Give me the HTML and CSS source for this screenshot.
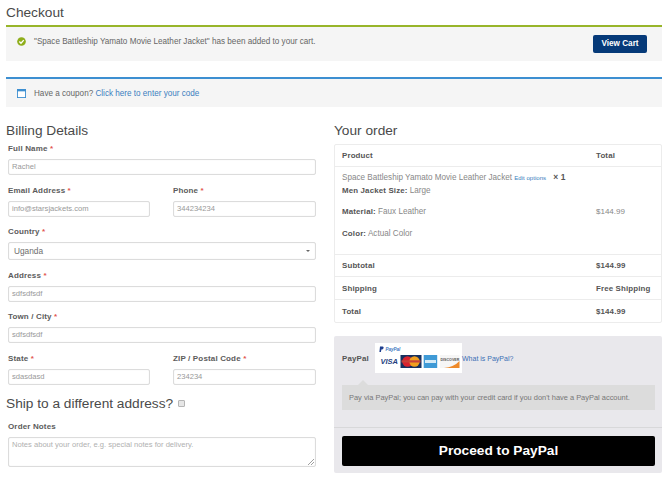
FILE: index.html
```html
<!DOCTYPE html>
<html lang="en">
<head>
<meta charset="utf-8">
<title>Checkout</title>
<link rel="stylesheet" href="styles.css">
</head>
<body>
<h1 class="page-title">Checkout</h1>
<div class="notice notice-green">
  <svg class="notice-icon" viewBox="0 0 10 10" width="9" height="9"><circle cx="5" cy="5" r="4.8" fill="#8fae1b"/><path d="M2.6 5.1 4.4 6.9 7.5 3.5" fill="none" stroke="#fff" stroke-width="1.5"/></svg>
  <span class="notice-text">"Space Battleship Yamato Movie Leather Jacket" has been added to your cart.</span>
  <a class="btn-cart">View Cart</a>
</div>
<div class="notice notice-blue">
  <svg class="notice-icon-cal" viewBox="0 0 10 10" width="9" height="9"><rect x=".5" y=".5" width="9" height="9" fill="#fff" stroke="#3d8fd1"/><rect x="0" y="0" width="10" height="2.6" fill="#3d8fd1"/></svg>
  <span class="notice-text">Have a coupon? <a class="link">Click here to enter your code</a></span>
</div>
<div class="columns">
  <form class="billing">
    <h2 class="section-title">Billing Details</h2>
    <div class="field first"><label>Full Name <i>*</i></label><div class="input">Rachel</div></div>
    <div class="field-row">
      <div class="field"><label>Email Address <i>*</i></label><div class="input">info@starsjackets.com</div></div>
      <div class="field"><label>Phone <i>*</i></label><div class="input">344234234</div></div>
    </div>
    <div class="field"><label>Country <i>*</i></label><div class="input select"><span>Uganda</span><b class="caret"></b></div></div>
    <div class="field"><label>Address <i>*</i></label><div class="input">sdfsdfsdf</div></div>
    <div class="field"><label>Town / City <i>*</i></label><div class="input">sdfsdfsdf</div></div>
    <div class="field-row">
      <div class="field"><label>State <i>*</i></label><div class="input">sdasdasd</div></div>
      <div class="field"><label>ZIP / Postal Code <i>*</i></label><div class="input">234234</div></div>
    </div>
    <h2 class="ship-title">Ship to a different address? <span class="checkbox"></span></h2>
    <div class="field notes"><label>Order Notes</label><div class="input textarea">Notes about your order, e.g. special notes for delivery.<svg class="grip" viewBox="0 0 6 6" width="6" height="6"><path d="M0 6 6 0M3 6 6 3" stroke="#888" stroke-width=".8"/></svg></div></div>
  </form>
  <div class="order">
    <h2 class="section-title">Your order</h2>
    <div class="order-table">
      <div class="row head"><span class="c1">Product</span><span class="c2">Total</span></div>
      <div class="row product">
        <div class="c1 details">
          <div class="line-name">Space Battleship Yamato Movie Leather Jacket <a class="edit">Edit options</a> <b class="qty">× 1</b></div>
          <div class="line-size"><b>Men Jacket Size:</b> Large</div>
          <div class="line-mat"><b>Material:</b> Faux Leather</div>
          <div class="line-col"><b>Color:</b> Actual Color</div>
        </div>
        <span class="c2 price">$144.99</span>
      </div>
      <div class="row sum"><span class="c1">Subtotal</span><span class="c2">$144.99</span></div>
      <div class="row sum"><span class="c1">Shipping</span><span class="c2">Free Shipping</span></div>
      <div class="row sum last"><span class="c1">Total</span><span class="c2">$144.99</span></div>
    </div>
    <div class="payment">
      <div class="pay-head">
        <span class="pay-label">PayPal</span>
        <svg class="pay-logo" viewBox="0 0 87 30" width="87" height="30">
          <rect width="87" height="30" fill="#fff"/>
          <path d="M5 3.5h2.6q1.4.2 1 1.600-.4 1.500-2.200 1.500l-.5 2.400H4.400z" fill="#1f3f8f"/>
          <text x="10.500" y="8" class="svg-pp">PayPal</text>
          <text x="5.500" y="21" class="svg-visa">VISA</text>
          <rect x="25.500" y="12" width="21" height="13" fill="#16305f"/>
          <circle cx="32.500" cy="18.500" r="5.200" fill="#d9232e"/>
          <circle cx="39.500" cy="18.500" r="5.200" fill="#f0a020"/>
          <rect x="26.500" y="17.300" width="19" height="2.200" fill="#c8423a"/>
          <rect x="48.700" y="12" width="13.500" height="13" fill="#3f9ad6"/>
          <rect x="50" y="17" width="11" height="3" fill="#d6ebf7"/>
          <rect x="65" y="12" width="19.500" height="13" fill="#f6f6f6"/>
          <text x="65.500" y="17.500" class="svg-disc">DISCOVER</text>
          <path d="M84.500 18V25H69Q79 24 84.500 18Z" fill="#ee8a2a"/>
        </svg>
        <a class="what">What is PayPal?</a>
      </div>
      <div class="pay-desc">Pay via PayPal; you can pay with your credit card if you don't have a PayPal account.</div>
      <div class="pay-foot"><a class="btn-proceed">Proceed to PayPal</a></div>
    </div>
  </div>
</div>
</body>
</html>
```
FILE: styles.css
```css
* { box-sizing: border-box; }
html, body { margin: 0; padding: 0; }
body {
  width: 668px;
  height: 480px;
  overflow: hidden;
  padding: 0 6px;
  background: #fff;
  font-family: "Liberation Sans", Arial, sans-serif;
  color: #6d6d6d;
  font-size: 8.150px;
}
.page-title {
  margin: 0;
  height: 25px;
  font-weight: 400;
  font-size: 13.700px;
  line-height: 25px;
  color: #4a4a4a;
}
.notice {
  display: flex;
  align-items: center;
  width: 656px;
  background: #f5f5f5;
}
.notice-green {
  height: 36px;
  border-top: 2px solid #98b52a;
  padding: 0 15px 0 12px;
}
.notice-green .notice-icon { margin-top: -6px; }
.notice-green .notice-text { margin-top: -6px; }
.notice-blue {
  height: 30px;
  margin-top: 16px;
  border-top: 2px solid #3d8fd1;
  padding: 0 12px;
}
.notice-icon, .notice-icon-cal { flex: none; margin-right: 8px; margin-left: -1px; }
.notice-text { color: #666; flex: 1; }
.link { color: #3c7fc0; }
.btn-cart {
  flex: none;
  width: 54px;
  height: 18px;
  margin-top: -1px;
  border-radius: 2px;
  background: #063a79;
  color: #fff;
  font-weight: 700;
  font-size: 8.200px;
  line-height: 18px;
  text-align: center;
}
.columns {
  display: flex;
  margin-top: 14px;
  gap: 18px;
}
.billing { width: 310px; flex: none; }
.order { width: 328px; flex: none; }
.section-title {
  margin: 0;
  height: 19px;
  font-weight: 400;
  font-size: 13.700px;
  line-height: 19px;
  color: #4a4a4a;
}
.field { margin-top: 9.500px; padding-left: 2px; }
.field.first { margin-top: 3px; }
.field label {
  display: block;
  height: 11px;
  margin-bottom: 5px;
  font-weight: 700;
  font-size: 8px;
  line-height: 11px;
  letter-spacing: .15px;
  color: #5c5c5c;
}
.field label i { font-style: normal; color: #e2564f; }
.field-row { display: grid; grid-template-columns: 144px 145px; column-gap: 21px; }
.input {
  height: 16px;
  width: 100%;
  padding-left: 3px;
  border: 1px solid #dcdcdc;
  border-radius: 2px;
  box-shadow: inset 0 0 1px #ddd;
  background: #fff;
  color: #999;
  font-size: 7.600px;
  line-height: 14px;
}
.select {
  display: flex;
  justify-content: space-between;
  align-items: center;
  height: 18px;
  padding: 0 5px;
  color: #6d6d6d;
  font-size: 8.300px;
}
.caret {
  width: 0;
  height: 0;
  border: 2.500px solid transparent;
  border-top-color: #666;
  border-bottom: 0;
}
.ship-title {
  display: flex;
  align-items: center;
  margin: 9px 0 0;
  height: 19px;
  font-weight: 400;
  font-size: 13.700px;
  line-height: 19px;
  color: #4a4a4a;
  white-space: pre;
}
.checkbox {
  width: 7px;
  height: 7px;
  margin-left: 1px;
  border: 1px solid #b5b5b5;
  border-radius: 1px;
  background: #e6e6e6;
}
.field.notes { margin-top: 8px; }
.textarea {
  position: relative;
  height: 30px;
  color: #b0b0b0;
  line-height: 14px;
}
.grip { position: absolute; right: 1px; bottom: 1px; }
.order-table {
  width: 328px;
  margin-top: 3.500px;
  border: 1px solid #ececec;
  border-radius: 2px;
}
.row { display: flex; align-items: center; padding-left: 7px; }
.c1 { width: 254px; flex: none; }
.c2 { flex: 1; white-space: nowrap; }
.head, .sum {
  height: 22.500px;
  border-bottom: 1px solid #ececec;
  font-weight: 700;
  font-size: 7.900px;
  letter-spacing: .15px;
  color: #555;
}
.sum { padding-top: 1px; }
.head { height: 22px; }
.sum.last { border-bottom: 0; }
.product {
  height: 88px;
  border-bottom: 1px solid #ececec;
  align-items: flex-start;
}
.details { color: #888; padding-top: 4px; }
.details b { color: #555; font-size: 7.900px; letter-spacing: .15px; }
.line-name { height: 12px; line-height: 12px; white-space: nowrap; }
.line-size { height: 12px; line-height: 12px; margin-top: 2px; }
.line-mat { height: 12px; line-height: 12px; margin-top: 9px; }
.line-col { height: 12px; line-height: 12px; margin-top: 10px; }
.edit { color: #3c7fc0; font-size: 6.100px; }
.details .qty { margin-left: 5px; font-size: 8.400px; }
.price { margin-top: 40px; color: #888; font-size: 8px; }
.payment {
  height: 137px;
  margin-top: 13px;
  background: #e9e8ec;
  border-radius: 2px;
}
.pay-head {
  display: flex;
  align-items: center;
  height: 37px;
  padding: 7px 0 0 8px;
}
.pay-label {
  width: 33px;
  flex: none;
  font-weight: 700;
  font-size: 7.900px;
  color: #555;
  letter-spacing: .15px;
}
.pay-logo { flex: none; display: block; }
.svg-pp { font: italic 700 4.500px "Liberation Sans", sans-serif; fill: #3a76c0; }
.svg-visa { font: italic 700 7.500px "Liberation Sans", sans-serif; fill: #1f3f7f; }
.svg-disc { font: 700 3.600px "Liberation Sans", sans-serif; fill: #555; }
.what { color: #3c6fb5; font-size: 7px; }
.pay-desc {
  position: relative;
  width: 313px;
  height: 25px;
  margin: 12px 0 0 8px;
  padding-left: 7px;
  background: #dcdcdc;
  color: #777;
  font-size: 7.450px;
  line-height: 25px;
}
.pay-desc::before {
  content: "";
  position: absolute;
  left: 16px;
  top: -5px;
  border: 5px solid transparent;
  border-top: 0;
  border-bottom-color: #dcdcdc;
}
.pay-foot {
  height: 46px;
  margin-top: 17px;
  padding: 8px 7px 0 8px;
  border-top: 1px solid #d8d8da;
}
.btn-proceed {
  display: block;
  height: 30px;
  border-radius: 2px;
  background: #000;
  color: #fff;
  font-weight: 700;
  font-size: 13.700px;
  line-height: 30px;
  text-align: center;
}
```
